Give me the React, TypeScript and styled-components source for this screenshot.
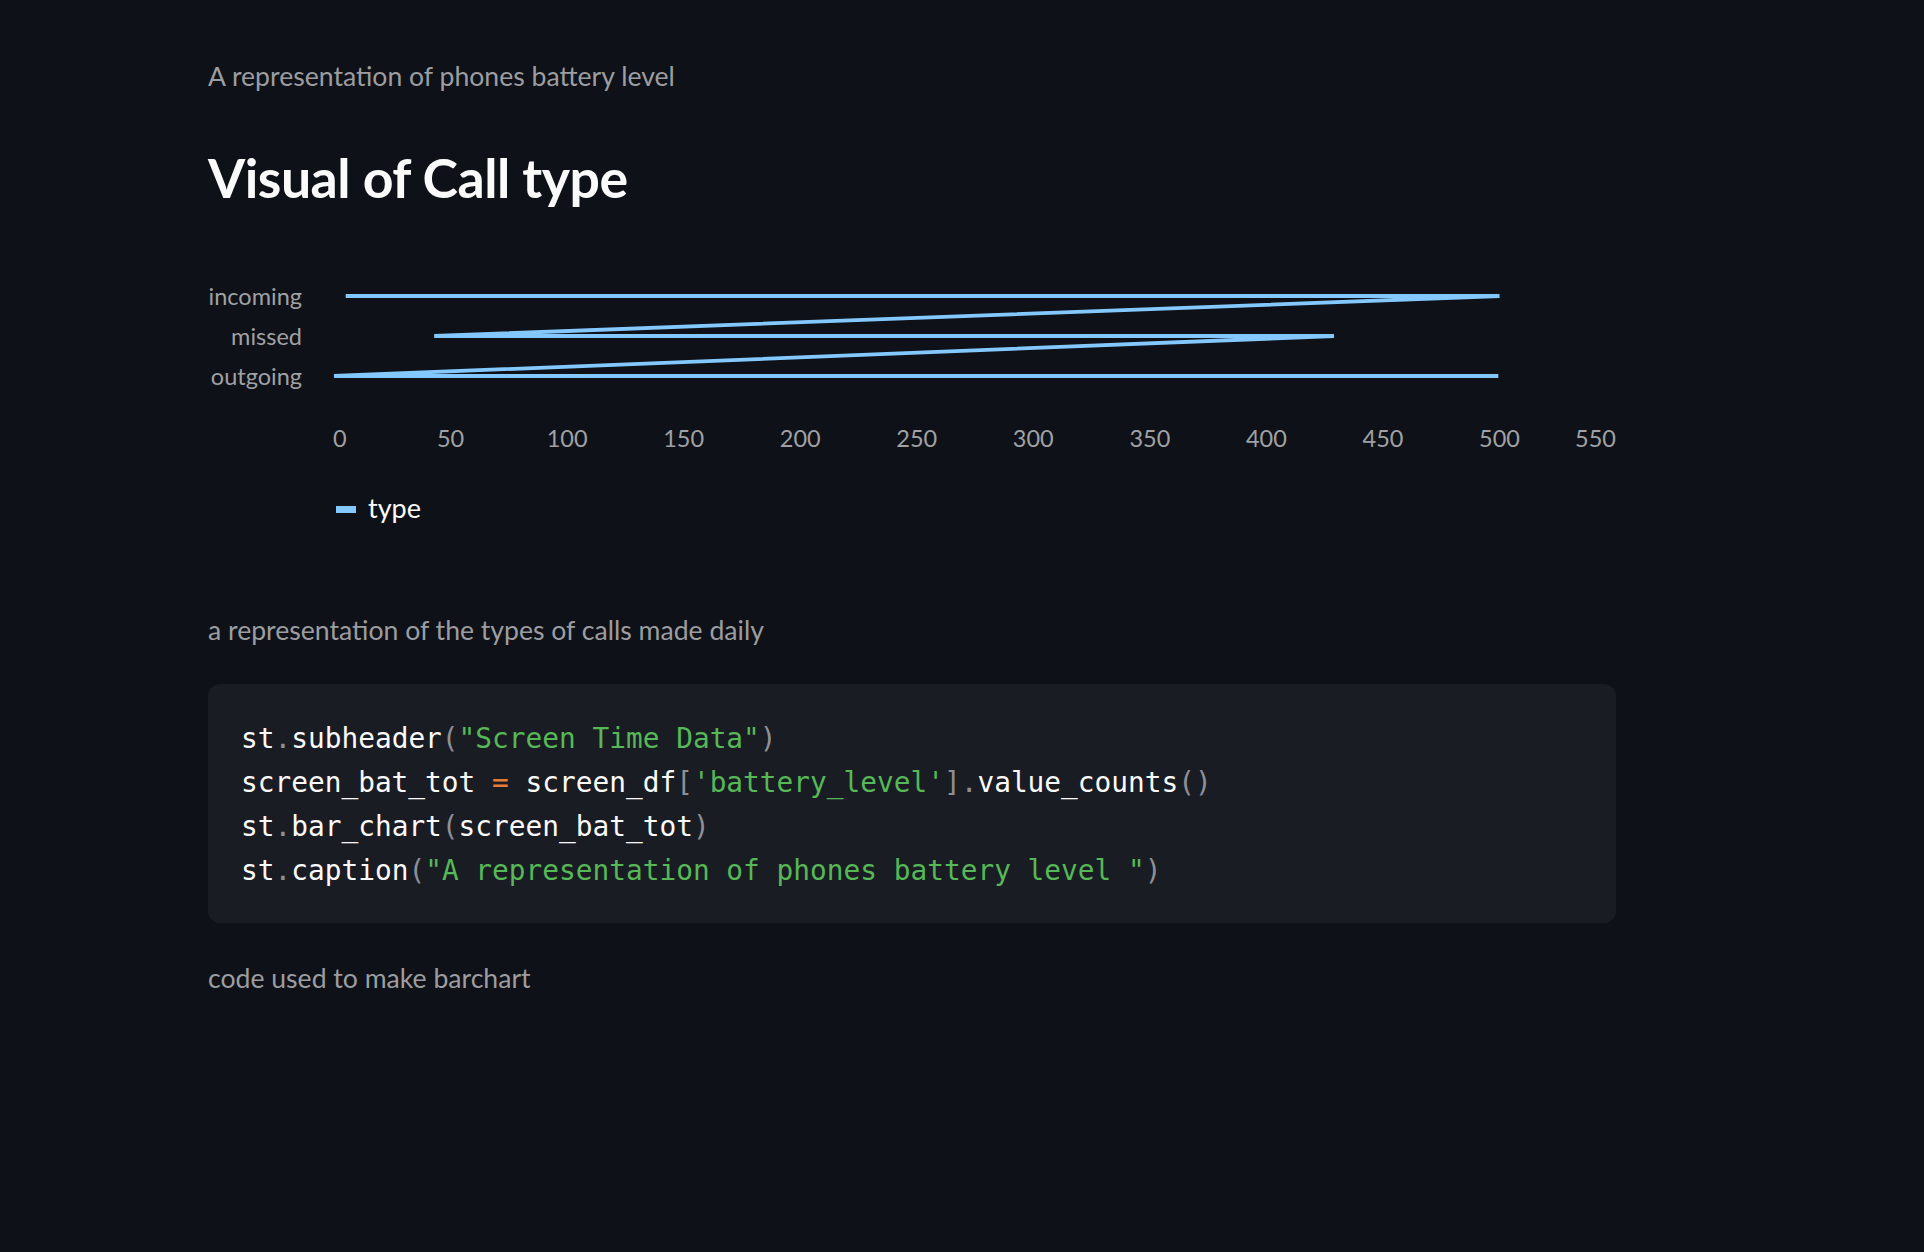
import React from "react";
import styled, { createGlobalStyle } from "styled-components";

const GlobalStyle = createGlobalStyle`
  html, body {
    margin: 0;
    padding: 0;
    background: #0e1117;
  }
  body {
    font-family: Lato, "Noto Sans", sans-serif;
    color: #fafafa;
    -webkit-font-smoothing: antialiased;
  }
`;

const Main = styled.main`
  width: 1408px;
  padding: 60px 0 300px 208px;
  display: flex;
  flex-direction: column;
`;

const Caption = styled.p<{ $top: number }>`
  margin: ${(p) => p.$top}px 0 0 0;
  font-family: Lato, "Noto Sans", sans-serif;
  font-size: 26.6px;
  line-height: 32px;
  color: rgb(156, 157, 160);
`;

const Title = styled.h2`
  margin: 53px 0 0 0;
  font-family: Lato, "Noto Sans", sans-serif;
  font-weight: 700;
  font-size: 53.6px;
  line-height: 64px;
  color: #fafafa;
  letter-spacing: -0.5px;
`;

const ChartSvg = styled.svg`
  display: block;
  margin-top: 61px;
  width: 1408px;
  height: 190px;
  overflow: visible;
`;

const AxisText = styled.text`
  font-family: Lato, "Noto Sans", sans-serif;
  font-size: 23.5px;
  fill: rgb(160, 161, 164);
`;

const Legend = styled.div`
  margin: 31.5px 0 0 128px;
  display: flex;
  align-items: center;
  gap: 12px;
  height: 32px;
`;

const LegendSwatch = styled.span`
  display: block;
  width: 20px;
  height: 7px;
  background: #83c9ff;
  margin-top: 3px;
`;

const LegendLabel = styled.span`
  font-family: Lato, "Noto Sans", sans-serif;
  font-size: 27px;
  line-height: 32px;
  color: #fafafa;
`;

const CodeBlock = styled.pre`
  margin: 38px 0 0 0;
  padding: 33px 33px 29px;
  background: #1a1c24;
  border-radius: 12px;
  font-family: "DejaVu Sans Mono", "Liberation Mono", monospace;
  font-size: 27.8px;
  line-height: 44.3px;
  color: #fafafa;
  white-space: pre;
  overflow: hidden;
`;

const CodeLine = styled.div`
  display: block;
`;

type Kind = "plain" | "punct" | "str" | "op";

const Tok = styled.span<{ $k: Kind }>`
  color: ${(p) =>
    p.$k === "punct"
      ? "#8e9097"
      : p.$k === "str"
      ? "#56b856"
      : p.$k === "op"
      ? "#e57c38"
      : "#fafafa"};
`;

const code: [Kind, string][][] = [
  [
    ["plain", "st"],
    ["punct", "."],
    ["plain", "subheader"],
    ["punct", "("],
    ["str", '"Screen Time Data"'],
    ["punct", ")"],
  ],
  [
    ["plain", "screen_bat_tot "],
    ["op", "="],
    ["plain", " screen_df"],
    ["punct", "["],
    ["str", "'battery_level'"],
    ["punct", "]."],
    ["plain", "value_counts"],
    ["punct", "()"],
  ],
  [
    ["plain", "st"],
    ["punct", "."],
    ["plain", "bar_chart"],
    ["punct", "("],
    ["plain", "screen_bat_tot"],
    ["punct", ")"],
  ],
  [
    ["plain", "st"],
    ["punct", "."],
    ["plain", "caption"],
    ["punct", "("],
    ["str", '"A representation of phones battery level "'],
    ["punct", ")"],
  ],
];

const X0 = 126;
const PX = 2.331;
const xs = (v: number) => X0 + v * PX;

const ticks = [0, 50, 100, 150, 200, 250, 300, 350, 400, 450, 500, 550];

const linePts: [number, number][] = [
  [5, 26],
  [500, 26],
  [43, 66],
  [429, 66],
  [0, 106],
  [499.5, 106],
];

function CallTypeChart() {
  const d = linePts
    .map(([v, y], i) => `${i === 0 ? "M" : "L"}${xs(v).toFixed(1)},${y}`)
    .join(" ");
  return (
    <ChartSvg viewBox="0 0 1408 190">
      <AxisText x={94} y={35} textAnchor="end">incoming</AxisText>
      <AxisText x={94} y={75} textAnchor="end">missed</AxisText>
      <AxisText x={94} y={115} textAnchor="end">outgoing</AxisText>
      <path
        d={d}
        fill="none"
        stroke="#83c9ff"
        strokeWidth={3.8}
        strokeLinejoin="bevel"
        strokeLinecap="butt"
      />
      {ticks.map((t, i) => (
        <AxisText
          key={t}
          x={i === ticks.length - 1 ? 1408 : xs(t) - (i === 0 ? 1 : 0)}
          y={177}
          textAnchor={i === 0 ? "start" : i === ticks.length - 1 ? "end" : "middle"}
        >
          {t}
        </AxisText>
      ))}
    </ChartSvg>
  );
}

export default function App() {
  return (
    <>
      <GlobalStyle />
      <Main>
        <Caption $top={0}>A representation of phones battery level</Caption>
        <Title>Visual of Call type</Title>
        <CallTypeChart />
        <Legend>
          <LegendSwatch />
          <LegendLabel>type</LegendLabel>
        </Legend>
        <Caption $top={90}>a representation of the types of calls made daily</Caption>
        <CodeBlock>
          {code.map((line, i) => (
            <CodeLine key={i}>
              {line.map(([k, s], j) => (
                <Tok key={j} $k={k}>
                  {s}
                </Tok>
              ))}
            </CodeLine>
          ))}
        </CodeBlock>
        <Caption $top={39}>code used to make barchart</Caption>
      </Main>
    </>
  );
}
